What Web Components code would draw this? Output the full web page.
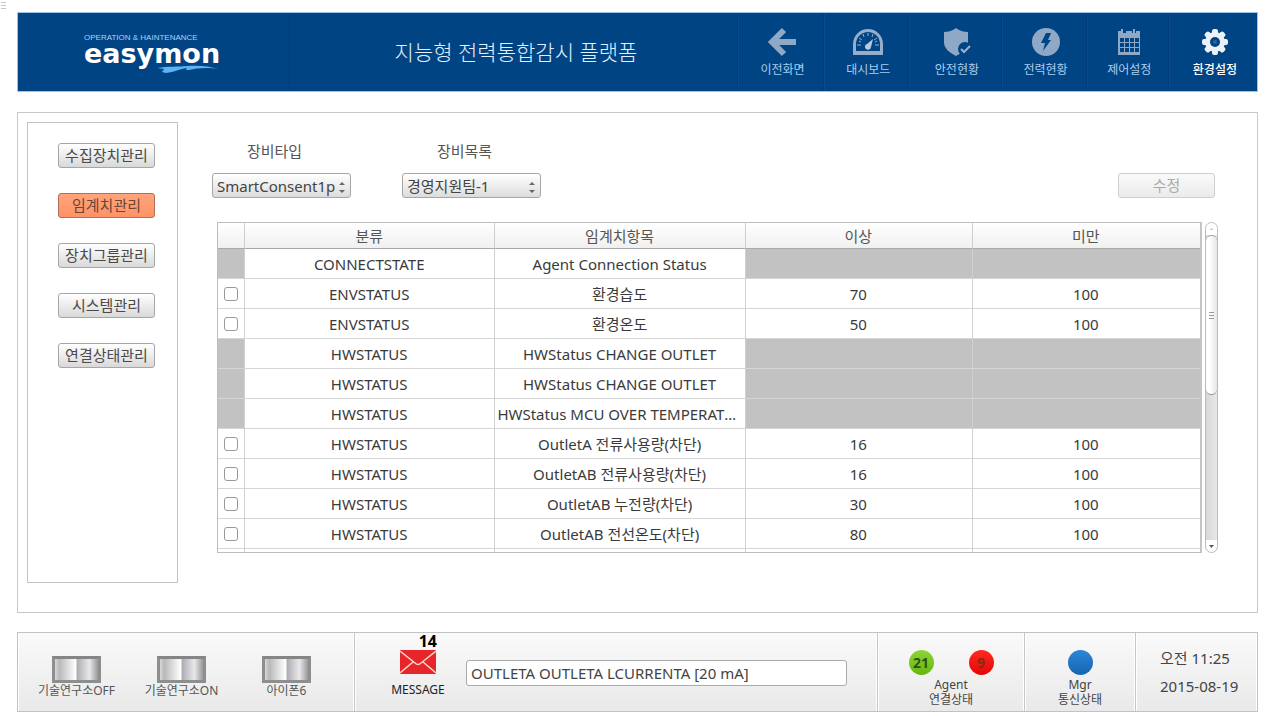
<!DOCTYPE html>
<html lang="ko">
<head>
<meta charset="utf-8">
<title>easymon 지능형 전력통합감시 플랫폼</title>
<style>
html,body{height:100%}
body{margin:0;background:#fff;color:#333;font:15px/20px "Noto Sans","Noto Sans CJK KR",sans-serif}
</style>
</head>
<body>
<monitor-app></monitor-app>
<script>
const define = (name, html, setup) => {
  const tpl = document.createElement('template');
  tpl.innerHTML = html;
  customElements.define(name, class extends HTMLElement {
    constructor() {
      super();
      this.attachShadow({mode: 'open'}).append(tpl.content.cloneNode(true));
    }
    connectedCallback() { if (setup && !this.ready) { this.ready = true; setup(this, this.shadowRoot); } }
  });
};

/* one entry of the top navigation */
define('nav-item', `
<style>
:host{display:block;min-width:0;border-left:1px solid #003c78;box-shadow:inset 1px 0 #084b8d;color:#a9cdf0}
:host([current]){color:#fff;font-weight:500}
a{display:flex;flex-direction:column;align-items:center;gap:1px;height:100%;box-sizing:border-box;padding:12px 0 0 4px;color:inherit;text-decoration:none;font-size:12px;line-height:20px;white-space:nowrap}
.icon{display:block;width:34px;height:34px}
</style>
<a href="#"><span class="icon"><slot name="icon"></slot></span><slot></slot></a>`,
(el, root) => { if (el.hasAttribute('current')) root.querySelector('a').setAttribute('aria-current', 'page'); });

define('brand-logo', `
<style>
:host{display:flex;flex-direction:column;align-items:flex-start;position:relative;color:#fff;width:138px;height:42px;white-space:nowrap}
.tag{font:8px/10px "Liberation Sans",sans-serif;color:#a8d4f4}
.name{font:bold 27px/22px "DejaVu Sans",sans-serif;color:#fff}
svg{position:absolute;right:2px;bottom:2px;width:64px;height:8px}
</style>
<span class="tag">OPERATION &amp; HAINTENANCE</span>
<span class="name">easymon</span>
<svg viewBox="0 0 64 8" aria-hidden="true"><path d="M1 3C12 1 23 2 31 1C42 0 53 1 63 4C51 2 41 3 33 5L30 5L31 3C23 4 19 7 10 8L6 7L8 4Z" fill="#5cb4f4"/></svg>`);

define('app-header', `
<style>
:host{display:block}
header{display:grid;grid-template-columns:272px minmax(0,1fr) 520px;height:78px;background:#004483;border:1px solid #9cc4ea}
.brand{display:flex;align-items:center;padding:4px 0 0 66px;border-right:1px solid #003c78}
h1{margin:0;padding-left:5px;align-self:center;text-align:center;font-size:21px;line-height:30px;font-weight:300;color:#e2f1ff;white-space:nowrap}
nav{display:grid;grid-template-columns:86fr 85fr 92fr 85fr 82fr 89fr}
svg{display:block;width:34px;height:34px}
</style>
<header>
<div class="brand"><brand-logo></brand-logo></div>
<h1>지능형 전력통합감시 플랫폼</h1>
<nav>
<nav-item>이전화면<svg slot="icon" viewBox="0 0 34 34"><path d="M18 5L6 17L18 29M7 17H30" fill="none" stroke="#8fa8c6" stroke-width="6"/></svg></nav-item>
<nav-item>대시보드<svg slot="icon" viewBox="0 0 34 34"><path d="M2 30V19a15 15 0 0 1 30 0v11Z" fill="#97aecb"/><path d="M5 26V19a12 12 0 0 1 24 0v7Z" fill="#004483"/><path d="M6 20h4M28 20h-4M8 13l3 2M26 13l-3 2M12 9l1 3M22 9l-1 3M17 8v3M8 16l2 1M26 16l-2 1" stroke="#97aecb" stroke-width="1"/><path d="M22 14l-2 8a3 3 0 1 1-4-3Z" fill="#b9c9dc"/></svg></nav-item>
<nav-item>안전현황<svg slot="icon" viewBox="0 0 34 34"><path d="M16 3q5 4 12 4v11q0 7-12 13Q4 25 4 18V7q7 0 12-4Z" fill="#8fa8c6"/><circle cx="25" cy="24" r="7" fill="#004483"/><path d="M21 24l3 3 6-6" fill="none" stroke="#9db3cd" stroke-width="2"/></svg></nav-item>
<nav-item>전력현황<svg slot="icon" viewBox="0 0 34 34"><circle cx="17" cy="17" r="14" fill="#8fa8c6"/><path d="M17 8h5l-3 7h3l-8 11 2-8h-4Z" fill="#004483"/></svg></nav-item>
<nav-item>제어설정<svg slot="icon" viewBox="0 0 34 34"><path d="M6 6h3V4h2v4h3V6h6v2h1V4h2v4h1V6h4v24H6Z" fill="#8fa8c6"/><path d="M8 13h4v4H8zm5 0h4v4h-4zm5 0h4v4h-4zm5 0h4v4h-4zM8 18h4v4H8zm5 0h4v4h-4zm5 0h4v4h-4zm5 0h4v4h-4zM8 23h4v4H8zm5 0h4v4h-4zm5 0h4v4h-4zm5 0h4v4h-4z" fill="#004483"/></svg></nav-item>
<nav-item current>환경설정<svg slot="icon" viewBox="0 0 34 34"><g fill="#eaf1f7"><circle cx="17" cy="17" r="10"/><rect x="14" y="4" width="6" height="26" rx="2"/><rect x="4" y="14" width="26" height="6" rx="2"/><g transform="rotate(45 17 17)"><rect x="14" y="4" width="6" height="26" rx="2"/><rect x="4" y="14" width="26" height="6" rx="2"/></g></g><circle cx="17" cy="17" r="5" fill="#004483"/><circle cx="17" cy="17" r="2" fill="#2b64a0"/></svg></nav-item>
</nav>
</header>`);

define('push-button', `
<style>
:host{display:block;width:97px}
button{display:block;width:100%;height:25px;padding:0;border:1px solid #a6a6a6;border-radius:3px;background:linear-gradient(#fff,#d9d9d9);color:#4a4a4a;font:inherit;line-height:23px;white-space:nowrap}
:host([selected]) button{background:linear-gradient(#ffa47c,#ff9266);border-color:#b07058;color:#6a4636}
button:disabled{color:#aaa;border-color:#cfcfcf;background:linear-gradient(#fafafa,#ebebeb)}
</style>
<button type="button"><slot></slot></button>`,
(el, root) => { root.querySelector('button').disabled = el.hasAttribute('inactive'); });

define('side-menu', `
<style>
:host{display:block;box-sizing:border-box;width:151px;border:1px solid #c4c4c4;padding:20px 0}
nav{display:flex;flex-direction:column;align-items:center;gap:25px;padding-left:8px}
</style>
<nav>
<push-button>수집장치관리</push-button>
<push-button selected>임계치관리</push-button>
<push-button>장치그룹관리</push-button>
<push-button>시스템관리</push-button>
<push-button>연결상태관리</push-button>
</nav>`);

define('picker-field', `
<style>
:host{display:flex;flex-direction:column;align-items:stretch;gap:12px;width:139px}
label{text-align:center;color:#555;padding-right:14px}
.box{position:relative}
select{appearance:none;display:block;box-sizing:border-box;width:100%;height:25px;padding:0 14px 0 4px;border:1px solid #a6a6a6;border-radius:3px;background:linear-gradient(#fff,#dcdcdc);color:#444;font:15px/22px "Noto Sans","Noto Sans CJK KR",sans-serif}
svg{position:absolute;right:5px;top:8px;width:8px;height:12px;pointer-events:none}
</style>
<label for="s"></label>
<div class="box"><select id="s"><option></option></select><svg viewBox="0 0 8 12" aria-hidden="true"><path d="M1 4L4 1L7 4ZM1 9L4 12L7 9Z" fill="#666"/></svg></div>`,
(el, root) => {
  root.querySelector('label').textContent = el.getAttribute('label');
  root.querySelector('option').textContent = el.getAttribute('value');
});

define('scroll-rail', `
<style>
:host{display:flex;flex-direction:column;box-sizing:border-box;width:13px;border:1px solid #bbb;border-radius:7px;background:linear-gradient(90deg,#d8d8d8,#e8e8e8);overflow:hidden}
.cap{flex:none;display:flex;align-items:center;justify-content:center;height:12px;background:#fff}
.thumb{flex:none;display:flex;align-items:center;justify-content:center;box-sizing:border-box;height:160px;border:1px solid #999;border-width:1px 0;border-radius:6px;background:linear-gradient(90deg,#fff,#fff 30%,#e6e6e6)}
.end{margin-top:auto;border-radius:0 0 6px 6px}
svg{display:block;width:7px;height:7px}
</style>
<div class="cap"><svg viewBox="0 0 7 7"><path d="M2 4h3L3.500 2Z" fill="#bbb"/></svg></div>
<div class="thumb"><svg viewBox="0 0 7 7"><path d="M1 .5h5M1 3.500h5M1 6.500h5" stroke="#999"/></svg></div>
<div class="cap end"><svg viewBox="0 0 7 7"><path d="M1 2h5L3.500 5Z" fill="#555"/></svg></div>`);

const rows = [
  ['CONNECTSTATE', 'Agent Connection Status'],
  ['ENVSTATUS', '환경습도', 70, 100],
  ['ENVSTATUS', '환경온도', 50, 100],
  ['HWSTATUS', 'HWStatus CHANGE OUTLET'],
  ['HWSTATUS', 'HWStatus CHANGE OUTLET'],
  ['HWSTATUS', 'HWStatus MCU OVER TEMPERATURE'],
  ['HWSTATUS', 'OutletA 전류사용량(차단)', 16, 100],
  ['HWSTATUS', 'OutletAB 전류사용량(차단)', 16, 100],
  ['HWSTATUS', 'OutletAB 누전량(차단)', 30, 100],
  ['HWSTATUS', 'OutletAB 전선온도(차단)', 80, 100],
  null
];

define('threshold-table', `
<style>
:host{display:block;box-sizing:border-box;border:1px solid #bdbdbd;border-right:2px solid #c4c4c4;overflow:hidden;min-width:0}
table{width:100%;table-layout:fixed;border-collapse:separate;border-spacing:0}
.tick{width:27px}.kind{width:25.5%}.limit{width:23.1%}
th,td{box-sizing:border-box;padding:0 3px 0 2px;text-align:center;white-space:nowrap;overflow:hidden;text-overflow:ellipsis;border-right:1px solid #cfcfcf}
th:last-child,td:last-child{border-right:0}
th{height:26px;line-height:20px;font-weight:400;color:#555;background:linear-gradient(#fff,#f0f0f0);border-bottom:1px solid #aaa}
td{height:30px;line-height:20px;color:#3a3a3a;border-bottom:1px solid #d6d6d6}
td.off{background:#c2c2c2}
td:first-child{padding:0;text-overflow:clip}
input{appearance:none;display:block;box-sizing:border-box;width:14px;height:14px;margin:0 auto;border:1px solid #999;border-radius:3px;background:#fff}
</style>
<table>
<colgroup><col class="tick"><col class="kind"><col class="kind"><col class="limit"><col></colgroup>
<thead><tr><th></th><th scope="col">분류</th><th scope="col">임계치항목</th><th scope="col">이상</th><th scope="col">미만</th></tr></thead>
<tbody></tbody>
</table>`,
(el, root) => {
  const body = root.querySelector('tbody');
  for (const row of rows) {
    const tr = body.insertRow();
    const add = (text, off) => {
      const td = tr.insertCell();
      td.textContent = text ?? '';
      if (off) td.className = 'off';
      return td;
    };
    if (!row) { for (let i = 0; i < 5; i++) add(''); continue; }
    const [kind, item, over, under] = row;
    const locked = over === undefined;
    const first = add('', locked);
    if (!locked) {
      const box = document.createElement('input');
      box.type = 'checkbox';
      box.setAttribute('aria-label', item);
      first.append(box);
    }
    add(kind); add(item); add(over, locked); add(under, locked);
  }
});

define('threshold-view', `
<style>
:host{display:flex;flex-direction:column;min-width:0;padding-top:19px}
.tools{display:flex;align-items:flex-end;gap:51px}
push-button{margin:0 3px 0 auto}
.grid{display:flex;gap:3px;margin:24px 0 0 5px;height:331px}
threshold-table{flex:1}
</style>
<div class="tools">
<picker-field label="장비타입" value="SmartConsent1p"></picker-field>
<picker-field label="장비목록" value="경영지원팀-1"></picker-field>
<push-button inactive>수정</push-button>
</div>
<div class="grid"><threshold-table></threshold-table><scroll-rail></scroll-rail></div>`);

define('toggle-switch', `
<style>
:host{display:block;width:105px}
label{display:flex;flex-direction:column;align-items:center;font-size:12px;line-height:16px;color:#555;white-space:nowrap}
input{appearance:none;box-sizing:border-box;width:49px;height:27px;margin:0;border:3px solid #8e8e8e;border-top-color:#858585;background:linear-gradient(90deg,#d8d8d8,#b8b8b8 10%,#fff 48%,#aeaeb4 52%,#e8e8ec 80%,#999)}
</style>
<label><input type="checkbox"><span><slot></slot></span></label>`);

define('message-badge', `
<style>
:host{display:flex;flex-direction:column;align-items:center;position:relative;width:54px;padding-top:17px;font-size:12px;line-height:18px;color:#222}
svg{display:block;width:36px;height:24px;margin-bottom:7px}
b{position:absolute;top:0;right:8px;font-size:16px;line-height:16px;color:#000}
</style>
<b>14</b>
<svg viewBox="0 0 36 24" aria-hidden="true"><path d="M0 0h36v24H0Z" fill="#e6262a"/><path d="M0 1L15 13q3 3 6 0L36 1M0 23L13 12M36 23L23 12" fill="none" stroke="#ffd5cc" stroke-width="1.500"/></svg>
<span>MESSAGE</span>`);

define('status-dot', `
<style>
:host{display:flex;align-items:center;justify-content:center;width:25px;height:25px;border-radius:50%;font-size:14px;font-weight:700;line-height:20px;background:linear-gradient(#2c86d8,#1565b0)}
:host([tone=ok]){background:linear-gradient(#8ed43a,#66b60c);color:#2f5212}
:host([tone=bad]){background:linear-gradient(#ff2a22,#e40606);color:#8a2a10}
</style>
<slot></slot>`);

define('status-bar', `
<style>
:host{display:block}
footer{display:grid;grid-template-columns:337px minmax(0,1fr) 147px 111px 121px;box-sizing:border-box;height:80px;border:1px solid #c2c2c2;background:linear-gradient(#fafafa,#e9e9e9)}
section{min-width:0;box-sizing:border-box;border-right:1px solid #c6c6c6;box-shadow:inset -1px 0 #fff,inset 1px 0 #fff}
section:last-child{border-right:0}
.switches{display:flex;padding:23px 0 0 6px}
.message{display:flex;align-items:flex-start;gap:21px;padding:0 30px 0 36px}
input{flex:1;min-width:0;box-sizing:border-box;height:26px;margin-top:27px;padding:0 4px;border:1px solid #aaa;border-radius:3px;background:#fff;color:#444;font:15px/20px "Noto Sans","Noto Sans CJK KR",sans-serif}
.state{display:flex;flex-direction:column;align-items:center;gap:2px;padding-top:17px;font-size:12px;line-height:15px;color:#444;text-align:center}
.dots{display:flex;gap:35px}
.clock{display:flex;flex-direction:column;gap:8px;padding:15px 0 0 24px;line-height:20px;color:#444;white-space:nowrap}
</style>
<footer>
<section class="switches"><toggle-switch>기술연구소OFF</toggle-switch><toggle-switch>기술연구소ON</toggle-switch><toggle-switch>아이폰6</toggle-switch></section>
<section class="message"><message-badge></message-badge><input type="text" readonly aria-label="MESSAGE" value="OUTLETA OUTLETA LCURRENTA [20 mA]"></section>
<section class="state"><div class="dots"><status-dot tone="ok">21</status-dot><status-dot tone="bad">9</status-dot></div><div>Agent<br>연결상태</div></section>
<section class="state"><status-dot></status-dot><div>Mgr<br>통신상태</div></section>
<section class="clock"><span>오전 11:25</span><span>2015-08-19</span></section>
</footer>`);

define('monitor-app', `
<style>
:host{display:flex;flex-direction:column;box-sizing:border-box;min-height:100%;padding:12px 18px 4px 17px;position:relative}
main{flex:1;display:grid;grid-template-columns:auto minmax(0,1fr);gap:34px;box-sizing:border-box;margin:20px 0 19px;border:1px solid #c8c8c8;padding:9px 39px 29px 9px}
.grip{position:absolute;left:1px;top:1px;width:5px;height:9px}
</style>
<svg class="grip" viewBox="0 0 5 9" aria-hidden="true"><path d="M0 1.500h5M0 4.500h5M0 7.500h5" stroke="#c4c4c4"/></svg>
<app-header></app-header>
<main><side-menu></side-menu><threshold-view></threshold-view></main>
<status-bar></status-bar>`);
</script>
</body>
</html>
